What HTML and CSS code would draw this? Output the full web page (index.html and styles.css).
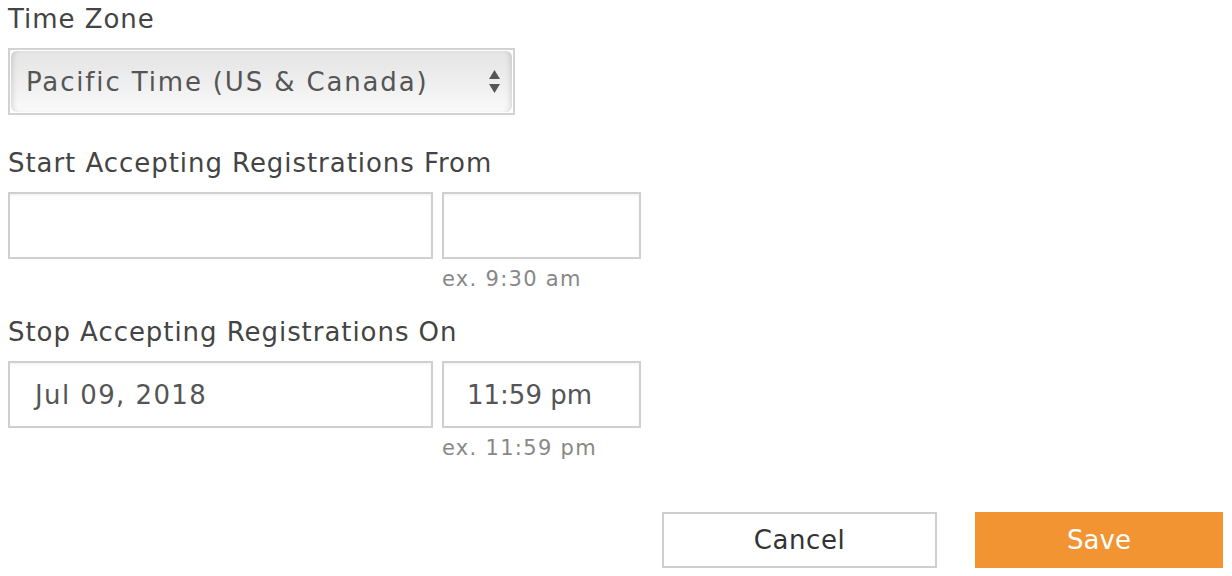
FILE: index.html
```html
<!DOCTYPE html>
<html>
<head>
<meta charset="utf-8">
<link rel="stylesheet" href="styles.css">
</head>
<body>
<form class="form">
  <div class="group group-tz">
    <label class="label">Time Zone</label>
    <div class="select">
      <div class="select-inner">
        <span class="select-value">Pacific Time (US &amp; Canada)</span>
        <span class="arrows">
          <svg width="11" height="24" viewBox="0 0 11 24"><path d="M5.5 0 L11 9 L0 9 Z" fill="#555"/><path d="M0 14 L11 14 L5.5 23 Z" fill="#555"/></svg>
        </span>
      </div>
    </div>
  </div>

  <div class="group">
    <label class="label">Start Accepting Registrations From</label>
    <div class="row">
      <div class="col-date"><div class="input"></div></div>
      <div class="col-time"><div class="input"></div><div class="hint">ex. 9:30 am</div></div>
    </div>
  </div>

  <div class="group">
    <label class="label">Stop Accepting Registrations On</label>
    <div class="row">
      <div class="col-date"><div class="input input-date">Jul 09, 2018</div></div>
      <div class="col-time"><div class="input">11:59 pm</div><div class="hint">ex. 11:59 pm</div></div>
    </div>
  </div>

  <div class="actions">
    <button type="button" class="btn btn-cancel">Cancel</button>
    <button type="button" class="btn btn-save">Save</button>
  </div>
</form>
</body>
</html>
```

FILE: styles.css
```css
html, body {
  margin: 0;
  padding: 0;
  background: #fff;
}
body {
  font-family: "DejaVu Sans", "Liberation Sans", sans-serif;
  color: #444;
}
.form {
  padding: 5px 9px 0 8px;
}
.label {
  display: block;
  font-size: 26px;
  line-height: 28px;
  letter-spacing: 0.95px;
  color: #444;
  margin-bottom: 15px;
}
.group {
  margin-bottom: 25px;
}
.group-tz {
  margin-bottom: 34px;
}
.select {
  width: 507px;
  height: 67px;
  box-sizing: border-box;
  border: 2px solid #d2d2d2;
  padding: 1px;
  background: #fff;
}
.select-inner {
  height: 100%;
  box-sizing: border-box;
  border-radius: 6px;
  background: linear-gradient(#e4e4e4, #eeeeee 50%, #fafafa);
  box-shadow: inset 5px 0 5px -3px rgba(0,0,0,0.12), inset -5px 0 5px -3px rgba(0,0,0,0.12);
  display: flex;
  align-items: center;
  justify-content: space-between;
  padding: 0 12px 0 15px;
}
.select-value {
  font-size: 26px;
  letter-spacing: 1.85px;
  color: #555;
}
.arrows {
  display: flex;
}
.row {
  display: flex;
  gap: 9px;
}
.col-date {
  width: 425px;
}
.col-time {
  width: 199px;
}
.input {
  height: 67px;
  box-sizing: border-box;
  border: 2px solid #cfcfcf;
  box-shadow: inset 0 2px 2px rgba(0,0,0,0.04);
  display: flex;
  align-items: center;
  padding-left: 23px;
  font-size: 26px;
  letter-spacing: 0;
  color: #555;
}
.input-date {
  padding-left: 25px;
  letter-spacing: 1.4px;
}
.hint {
  margin-top: 6px;
  font-size: 21px;
  line-height: 28px;
  letter-spacing: 1.3px;
  color: #888;
}
.actions {
  display: flex;
  justify-content: flex-end;
  gap: 38px;
  margin-top: 50px;
}
.btn {
  height: 56px;
  font-family: "DejaVu Sans", "Liberation Sans", sans-serif;
  font-size: 26px;
  border-radius: 0;
  padding: 0;
  cursor: pointer;
}
.btn-cancel {
  width: 275px;
  background: #fff;
  border: 2px solid #cfcfcf;
  letter-spacing: 0.6px;
  color: #333;
}
.btn-save {
  width: 248px;
  background: #f39433;
  border: none;
  color: #fff;
}
```
